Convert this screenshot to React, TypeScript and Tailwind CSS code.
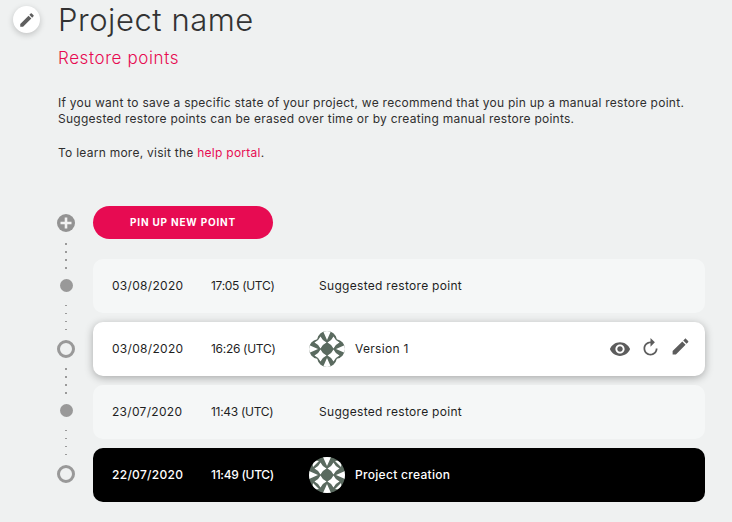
import React from 'react';

const EDIT = 'M3 17.25V21h3.75L17.81 9.94l-3.75-3.75L3 17.25zM20.71 7.04c.39-.39.39-1.02 0-1.41l-2.34-2.34c-.39-.39-1.02-.39-1.41 0l-1.83 1.83 3.75 3.75 1.83-1.83z';
const EYE = 'M12 4.5C7 4.5 2.73 7.61 1 12c1.73 4.39 6 7.5 11 7.5s9.27-3.11 11-7.5c-1.73-4.39-6-7.5-11-7.5zM12 17c-2.76 0-5-2.24-5-5s2.24-5 5-5 5 2.24 5 5-2.24 5-5 5zm0-8c-1.66 0-3 1.34-3 3s1.34 3 3 3 3-1.34 3-3-1.34-3-3-3z';
const REPLAY = 'M12 5V1L7 6l5 5V7c3.31 0 6 2.69 6 6s-2.69 6-6 6-6-2.69-6-6H4c0 4.42 3.58 8 8 8s8-3.58 8-8-3.58-8-8-8z';

const Icon = ({ d, className }: { d: string; className: string }) => (
  <svg viewBox="0 0 24 24" className={className} fill="currentColor">
    <path d={d} />
  </svg>
);

const Dots = ({ className }: { className: string }) => (
  <div className={`flex flex-col gap-[6.5px] ${className}`}>
    {[0, 1, 2, 3].map((i) => (
      <span key={i} className="h-[1.5px] w-[2px] bg-[#9a9a9a]" />
    ))}
  </div>
);

// generated avatar: repeated star tiles cut to a circle or a cross
const Avatar = ({ cross, id }: { cross?: boolean; id: string }) => {
  const dark = '#5a6a5f';
  const stars = [11.5, 24.5].flatMap((x) => [11.5, 24.5].map((y) => [x, y]));
  return (
    <svg viewBox="0 0 36 36" className="h-[36px] w-[36px] shrink-0">
      <defs>
        <clipPath id={id}>
          {cross ? (
            <>
              <circle cx="18" cy="10" r="10" />
              <circle cx="18" cy="26" r="10" />
              <circle cx="10" cy="18" r="10" />
              <circle cx="26" cy="18" r="10" />
            </>
          ) : (
            <circle cx="18" cy="18" r="18" />
          )}
        </clipPath>
      </defs>
      <g clipPath={`url(#${id})`}>
        <rect width="36" height="36" fill={dark} />
        {/* white wedges on the rim */}
        <path d="M14 0L18 9L22 0Z M36 14L27 18L36 22Z M14 36L18 27L22 36Z M0 14L9 18L0 22Z" fill="#fff" />
        <path d="M3 3L10 4L4 10Z M33 3L26 4L32 10Z M3 33L10 32L4 26Z M33 33L26 32L32 26Z" fill="#fff" />
        {stars.map(([x, y]) => (
          <path
            key={`${x}-${y}`}
            d={`M${x} ${y - 6}L${x + 2.4} ${y - 2.4}L${x + 6} ${y}L${x + 2.4} ${y + 2.4}L${x} ${y + 6}L${x - 2.4} ${y + 2.4}L${x - 6} ${y}L${x - 2.4} ${y - 2.4}Z`}
            fill="#fff"
          />
        ))}
      </g>
    </svg>
  );
};

const Row = ({
  date,
  time,
  children,
  className,
  right,
}: {
  date: string;
  time: string;
  children: React.ReactNode;
  className: string;
  right?: React.ReactNode;
}) => (
  <div className={`flex h-[54px] items-center rounded-[10px] pl-[19px] pr-[14px] text-[12px] tracking-[0.3px] ${className}`}>
    <span className="w-[99px]">{date}</span>
    <span className="w-[98px] tracking-[-0.3px]">{time}</span>
    {children}
    {right}
  </div>
);

export default function App() {
  return (
    <div className="relative h-[522px] w-[732px] overflow-hidden bg-[#eff1f1] font-['Inter','Liberation_Sans',sans-serif] text-[#2f2f2f]">
      <button className="absolute left-[13px] top-[6px] flex h-[27px] w-[27px] items-center justify-center rounded-full bg-white shadow-[0_2px_6px_rgba(0,0,0,0.2)]">
        <Icon d={EDIT} className="h-[18px] w-[18px] text-[#5f5f5f]" />
      </button>

      <div className="pl-[58px]">
        <h1 className="pt-[1px] text-[31px] font-light leading-[38px] tracking-[0.55px] text-[#333]">Project name</h1>
        <h2 className="mt-[8px] text-[17px] font-light leading-[22px] tracking-[0.6px] text-[#e70b52]">Restore points</h2>
        <div className="mt-[26px] text-[12px] leading-[16px] tracking-[0.26px]">
          <p>If you want to save a specific state of your project, we recommend that you pin up a manual restore point.</p>
          <p>Suggested restore points can be erased over time or by creating manual restore points.</p>
          <p className="mt-[18px]">
            To learn more, visit the <a className="text-[#e70b52]">help portal</a>.
          </p>
        </div>
      </div>

      <div className="mt-[45px] flex pl-[57px]">
        {/* timeline rail */}
        <div className="flex w-[18px] flex-col items-center pt-[8px]">
          <div className="flex h-[18px] w-[18px] items-center justify-center rounded-full bg-[#939393]">
            <svg viewBox="0 0 18 18" className="h-[18px] w-[18px]">
              <path d="M7.7 3.5h2.6v4.2h4.2v2.6h-4.2v4.2H7.7v-4.2H3.5V7.7h4.2z" fill="#f2f2f2" />
            </svg>
          </div>
          <Dots className="mt-[11px]" />
          <span className="mt-[10px] h-[13px] w-[13px] rounded-full bg-[#999]" />
          <Dots className="mt-[13px]" />
          <span className="mt-[10px] h-[18px] w-[18px] rounded-full border-[3px] border-[#999]" />
          <Dots className="mt-[10px]" />
          <span className="mt-[10px] h-[13px] w-[13px] rounded-full bg-[#999]" />
          <Dots className="mt-[13px]" />
          <span className="mt-[10px] h-[18px] w-[18px] rounded-full border-[3px] border-[#999]" />
        </div>

        <div className="ml-[18px] flex w-[612px] flex-col">
          <button className="h-[33px] w-[180px] rounded-full bg-[#e70b52] text-[10px] font-bold tracking-[0.8px] text-white">
            PIN UP NEW POINT
          </button>
          <div className="mt-[20px] flex flex-col gap-[9px]">
            <Row date="03/08/2020" time="17:05 (UTC)" className="bg-[#f5f7f7] text-[#1f1f1f]">
              <span className="ml-[10px]">Suggested restore point</span>
            </Row>
            <Row
              date="03/08/2020"
              time="16:26 (UTC)"
              className="bg-white text-[#1f1f1f] shadow-[0_2px_8px_rgba(0,0,0,0.3)]"
              right={
                <div className="ml-auto flex items-center text-[#5c5c5c]">
                  <Icon d={EYE} className="h-[22px] w-[22px]" />
                  <Icon d={REPLAY} className="mb-[4px] ml-[9px] h-[21px] w-[21px] -scale-x-100" />
                  <Icon d={EDIT} className="mb-[6px] ml-[9px] h-[21px] w-[21px]" />
                </div>
              }
            >
              <Avatar cross id="avatar-version" />
              <span className="ml-[10px]">Version 1</span>
            </Row>
            <Row date="23/07/2020" time="11:43 (UTC)" className="bg-[#f5f7f7] text-[#1f1f1f]">
              <span className="ml-[10px]">Suggested restore point</span>
            </Row>
            <Row date="22/07/2020" time="11:49 (UTC)" className="bg-black font-medium text-white">
              <Avatar id="avatar-creation" />
              <span className="ml-[10px]">Project creation</span>
            </Row>
          </div>
        </div>
      </div>
    </div>
  );
}
